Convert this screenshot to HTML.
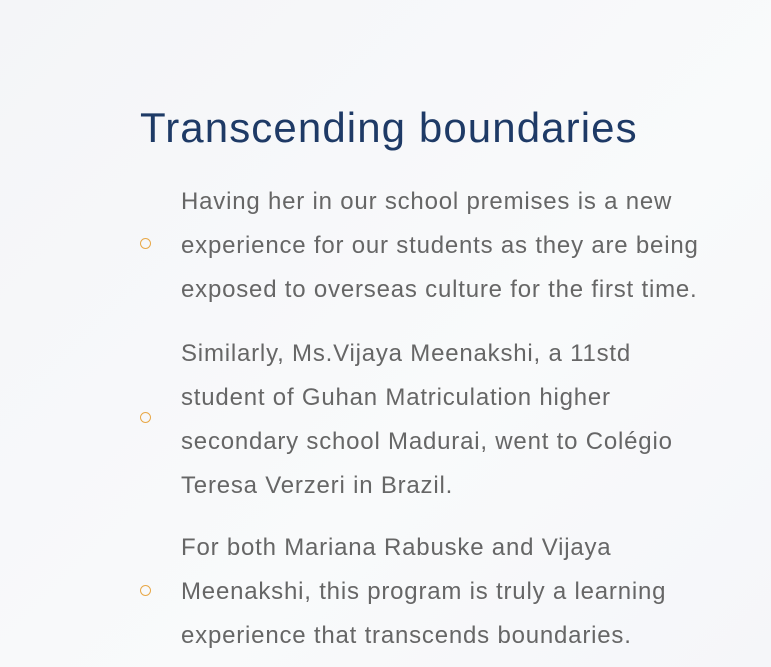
<!DOCTYPE html>
<html><head><style>
html,body{margin:0;padding:0;}
body{width:771px;height:667px;overflow:hidden;background:linear-gradient(135deg,#f4f5f8,#f9fafb 60%,#f5f6f9);font-family:"Liberation Sans",sans-serif;position:relative;}
h1{position:absolute;left:140px;top:101px;margin:0;font-size:42px;font-weight:normal;color:#1e3a66;line-height:54px;letter-spacing:1.1px;white-space:nowrap;}
.p{position:absolute;left:181px;font-size:24px;line-height:44px;color:#666;letter-spacing:0.8px;white-space:nowrap;}
.b{position:absolute;left:140px;width:9px;height:9px;border:1.6px solid #e8a848;border-radius:50%;}
</style></head><body>
<h1>Transcending boundaries</h1>
<div class="b" style="top:238px"></div>
<div class="p" style="top:180px">Having her in our school premises is a new<br>experience for our students as they are being<br>exposed to overseas culture for the first time.</div>
<div class="b" style="top:412px"></div>
<div class="p" style="top:332px">Similarly, Ms.Vijaya Meenakshi, a 11std<br>student of Guhan Matriculation higher<br>secondary school Madurai, went to Colégio<br>Teresa Verzeri in Brazil.</div>
<div class="b" style="top:585px"></div>
<div class="p" style="top:526px">For both Mariana Rabuske and Vijaya<br>Meenakshi, this program is truly a learning<br>experience that transcends boundaries.</div>
</body></html>
